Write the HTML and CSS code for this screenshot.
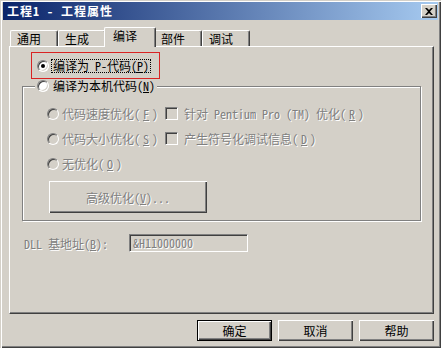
FILE: index.html
```html
<!DOCTYPE html>
<html>
<head>
  <meta charset="utf-8">
  <title>工程1 - 工程属性</title>
  <link rel="stylesheet" href="styles.css">
</head>
<body>
  <div class="window">
    <div class="titlebar">
      <span class="title">工程1 - 工程属性</span>
      <span class="close">
        <svg width="8" height="7" viewBox="0 0 8 7">
          <path d="M0 0h2l2 2 2-2h2L5 3.5 8 7H6L4 5 2 7H0l3-3.5z" fill="#000"/>
        </svg>
      </span>
    </div>

    <div class="content">
      <div class="tabs">
        <div class="tab">通用</div>
        <div class="tab">生成</div>
        <div class="tab active">编译</div>
        <div class="tab">部件</div>
        <div class="tab">调试</div>
      </div>

      <div class="panel">
        <div class="pcode">
          <span class="radio checked"></span>
          <span class="focus">编译为 P-代码(<u>P</u>)</span>
        </div>

        <fieldset class="group">
          <legend class="legend">
            <span class="radio"></span>
            <span>编译为本机代码(<u>N</u>)</span>
          </legend>
          <div class="opts">
            <div class="opt off"><span class="radio"></span>代码速度优化(<u>F</u>)</div>
            <div class="opt off"><span class="check"></span>针对 Pentium Pro (TM) 优化(<u>R</u>)</div>
            <div class="opt off"><span class="radio"></span>代码大小优化(<u>S</u>)</div>
            <div class="opt off"><span class="check"></span>产生符号化调试信息(<u>D</u>)</div>
            <div class="opt off"><span class="radio"></span>无优化(<u>O</u>)</div>
          </div>
          <div class="btn adv off">高级优化(<u>V</u>)...</div>
        </fieldset>

        <div class="dll off">
          <span class="dll-label">DLL 基地址(<u>B</u>):</span>
          <span class="textbox">&amp;H11000000</span>
        </div>
      </div>

      <div class="actions">
        <div class="btn default">确定</div>
        <div class="btn">取消</div>
        <div class="btn">帮助</div>
      </div>
    </div>
  </div>
</body>
</html>
```

FILE: styles.css
```css
body {
  margin: 0;
  background: #d4d0c8;
  font-family: "Noto Sans Mono CJK SC", "Noto Sans CJK SC", sans-serif;
  font-size: 12px;
  color: #000;
}

.window {
  box-sizing: border-box;
  width: 441px;
  height: 348px;
  padding: 2px 3px 3px 3px;
  background: #d4d0c8;
  box-shadow: inset 1px 1px 0 #d4d0c8, inset 2px 2px 0 #fff, inset -1px -1px 0 #404040, inset -2px -2px 0 #808080;
}

.titlebar {
  height: 18px;
  display: flex;
  align-items: center;
  justify-content: space-between;
  padding: 0 1px 0 4px;
  background: linear-gradient(to right, #0a246a, #a6caf0);
}

.title {
  color: #fff;
  font-weight: bold;
  letter-spacing: 1px;
  line-height: 18px;
}

.close {
  box-sizing: border-box;
  width: 16px;
  height: 14px;
  display: flex;
  align-items: center;
  justify-content: center;
  background: #d4d0c8;
  box-shadow: inset 1px 1px 0 #fff, inset -1px -1px 0 #404040, inset -2px -2px 0 #808080;
}

.content {
  padding: 7px 0 0 6px;
}

/* tabs */
.tabs {
  display: flex;
  align-items: flex-end;
  height: 19px;
  padding-left: 1px;
}

.tab {
  box-sizing: border-box;
  width: 48px;
  height: 16px;
  padding-left: 6px;
  line-height: 15px;
  border-top: 1px solid #fff;
  border-left: 1px solid #fff;
  border-right: 1px solid #404040;
  border-radius: 2px 2px 0 0;
  box-shadow: inset -1px 0 0 #808080;
}

.tab.active {
  position: relative;
  width: 52px;
  height: 20px;
  margin: 0 -2px -1px;
  padding-left: 8px;
  line-height: 16px;
  background: #d4d0c8;
}

.panel {
  box-sizing: border-box;
  width: 425px;
  height: 268px;
  border-top: 1px solid #fff;
  border-left: 1px solid #fff;
  border-right: 1px solid #404040;
  border-bottom: 1px solid #404040;
  box-shadow: inset -1px -1px 0 #808080;
}

/* controls */
.radio {
  box-sizing: border-box;
  flex: none;
  width: 12px;
  height: 12px;
  display: flex;
  align-items: center;
  justify-content: center;
  border: 1px solid;
  border-color: #808080 #fff #fff #808080;
  border-radius: 50%;
  background: #fff;
  box-shadow: inset 1px 1px 0 #404040, inset -1px -1px 0 #d4d0c8;
}

.radio.checked::after {
  content: "";
  width: 4px;
  height: 4px;
  border-radius: 50%;
  background: #000;
}

.check {
  box-sizing: border-box;
  flex: none;
  width: 13px;
  height: 13px;
  border: 1px solid;
  border-color: #808080 #fff #fff #808080;
  background: #d4d0c8;
  box-shadow: inset 1px 1px 0 #404040, inset -1px -1px 0 #d4d0c8;
}

.off {
  color: #808080;
  text-shadow: 1px 1px 0 #fff;
}

.off .radio {
  background: #d4d0c8;
}

.pcode {
  box-sizing: border-box;
  width: 129px;
  height: 27px;
  margin: 5px 0 0 21px;
  padding-left: 5px;
  display: flex;
  align-items: center;
  gap: 2px;
  border: 1px solid #d92323;
}

.focus {
  padding: 0 1px;
  line-height: 12px;
  border: 1px dotted #000;
}

.group {
  box-sizing: border-box;
  width: 399px;
  margin: 0 0 0 12px;
  padding: 0;
  min-width: 0;
  border: 1px solid #808080;
  box-shadow: 1px 1px 0 #fff, inset 1px 1px 0 #fff;
}

.legend {
  display: flex;
  align-items: center;
  gap: 4px;
  height: 14px;
  line-height: 14px;
  margin-left: 12px;
  padding: 0 2px;
  background: #d4d0c8;
}

.opts {
  display: grid;
  grid-template-columns: 118px auto;
  grid-auto-rows: 25px;
  padding: 8px 0 0 24px;
}

.opt {
  display: flex;
  align-items: center;
  gap: 3px;
}

.opt .check {
  margin-right: 3px;
}

.btn {
  box-sizing: border-box;
  width: 75px;
  height: 21px;
  display: flex;
  align-items: center;
  justify-content: center;
  background: #d4d0c8;
  box-shadow: inset 1px 1px 0 #fff, inset -1px -1px 0 #404040, inset -2px -2px 0 #808080;
}

.btn.default {
  border: 1px solid #000;
}

.adv {
  width: 158px;
  height: 32px;
  margin: 5px 0 7px 26px;
}

.dll {
  display: flex;
  align-items: center;
  margin: 13px 0 0 14px;
}

.dll-label {
  width: 105px;
}

.textbox {
  box-sizing: border-box;
  width: 119px;
  height: 18px;
  padding-left: 3px;
  line-height: 16px;
  border: 1px solid;
  border-color: #808080 #fff #fff #808080;
  box-shadow: inset 1px 1px 0 #404040, inset -1px -1px 0 #d4d0c8;
}

.actions {
  width: 425px;
  display: flex;
  justify-content: flex-end;
  gap: 6px;
  margin-top: 6px;
}
```
